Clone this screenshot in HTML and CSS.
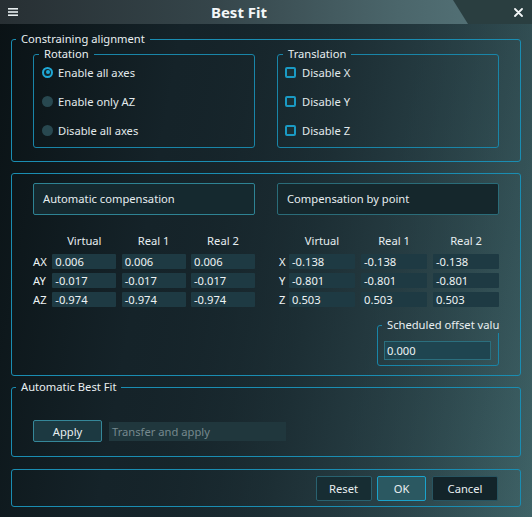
FILE: index.html
```html
<!DOCTYPE html>
<html lang="en">
<head>
<meta charset="utf-8">
<title>Best Fit</title>
<link rel="stylesheet" href="styles.css">
</head>
<body>
<div class="window">
  <header class="titlebar">
    <div class="menu">
      <svg width="10" height="8" viewBox="0 0 10 8"><rect x="0" y="0" width="10" height="1.6" fill="#e8eef0"/><rect x="0" y="3.2" width="10" height="1.6" fill="#e8eef0"/><rect x="0" y="6.4" width="10" height="1.6" fill="#e8eef0"/></svg>
    </div>
    <div class="title">Best Fit</div>
    <div class="close-area">
      <svg width="9" height="9" viewBox="0 0 9 9"><path d="M1 1 L8 8 M8 1 L1 8" stroke="#f2f6f7" stroke-width="1.8" stroke-linecap="round"/></svg>
    </div>
  </header>

  <main class="content">
    <fieldset class="group g1">
      <legend>Constraining alignment</legend>
      <div class="two-col">
        <fieldset class="sub rotation">
          <legend>Rotation</legend>
          <div class="list">
            <div class="opt"><span class="radio on"></span>Enable all axes</div>
            <div class="opt"><span class="radio"></span>Enable only AZ</div>
            <div class="opt"><span class="radio"></span>Disable all axes</div>
          </div>
        </fieldset>
        <fieldset class="sub translation">
          <legend>Translation</legend>
          <div class="list">
            <div class="opt"><span class="check"></span>Disable X</div>
            <div class="opt"><span class="check"></span>Disable Y</div>
            <div class="opt"><span class="check"></span>Disable Z</div>
          </div>
        </fieldset>
      </div>
    </fieldset>

    <div class="group g2">
      <div class="col">
        <div class="modebox auto">Automatic compensation</div>
        <div class="table left">
          <span></span><span class="hd">Virtual</span><span class="hd">Real 1</span><span class="hd">Real 2</span>
          <span class="lbl">AX</span><span class="cell">0.006</span><span class="cell">0.006</span><span class="cell">0.006</span>
          <span class="lbl">AY</span><span class="cell">-0.017</span><span class="cell">-0.017</span><span class="cell">-0.017</span>
          <span class="lbl">AZ</span><span class="cell">-0.974</span><span class="cell">-0.974</span><span class="cell">-0.974</span>
        </div>
      </div>
      <div class="col">
        <div class="modebox point">Compensation by point</div>
        <div class="table right">
          <span></span><span class="hd">Virtual</span><span class="hd">Real 1</span><span class="hd">Real 2</span>
          <span class="lbl">X</span><span class="cell">-0.138</span><span class="cell">-0.138</span><span class="cell">-0.138</span>
          <span class="lbl">Y</span><span class="cell">-0.801</span><span class="cell">-0.801</span><span class="cell">-0.801</span>
          <span class="lbl">Z</span><span class="cell">0.503</span><span class="cell">0.503</span><span class="cell">0.503</span>
        </div>
        <fieldset class="offset">
          <legend>Scheduled offset valu</legend>
          <div class="offset-body">
            <div class="input">0.000</div>
          </div>
        </fieldset>
      </div>
    </div>

    <fieldset class="group g3">
      <legend>Automatic Best Fit</legend>
      <div class="apply-row">
        <button class="btn apply">Apply</button>
        <div class="placeholder">Transfer and apply</div>
      </div>
    </fieldset>

    <div class="group g4">
      <button class="btn reset">Reset</button>
      <button class="btn ok">OK</button>
      <button class="btn cancel">Cancel</button>
    </div>
  </main>
</div>
</body>
</html>
```

FILE: styles.css
```css
* { box-sizing: border-box; }

html, body {
  margin: 0;
  padding: 0;
  background: #0d1519;
}

body {
  font-family: "Noto Sans", "Open Sans", "DejaVu Sans", sans-serif;
  font-size: 11.2px;
  color: #e4ecee;
}

.window {
  width: 532px;
  height: 517px;
  overflow: hidden;
  background: linear-gradient(100deg, #0a1215 0%, #152329 30%, #27404600 100%),
              linear-gradient(100deg, #0b1317 0%, #1b2c32 35%, #2f4a50 68%, #3f6367 100%);
}

/* ---------- title bar ---------- */
.titlebar {
  height: 24px;
  display: flex;
  align-items: stretch;
  background: linear-gradient(to right, #272f33 0%, #35454a 40%, #4b666b 75%, #58787d 100%);
}

.menu {
  width: 25px;
  padding-left: 8px;
  display: flex;
  align-items: center;
}
.menu svg { display: block; }

.title {
  flex: 1;
  text-align: center;
  font-weight: bold;
  font-size: 15px;
  line-height: 24px;
  color: #f3f7f8;
}

.close-area {
  width: 79px;
  background: #2a3e40;
  clip-path: polygon(0 0, 100% 0, 100% 100%, 15px 100%);
  display: flex;
  align-items: center;
  justify-content: flex-end;
  padding-right: 9px;
}
.close-area svg { display: block; }

/* ---------- content ---------- */
.content {
  padding: 7px 11px 0 11px;
}

fieldset {
  margin: 0;
  padding: 0;
  min-width: 0;
  border: 1px solid #1a8db2;
  border-radius: 3px;
}

legend {
  margin-left: 4px;
  padding: 0 5px;
  line-height: 16px;
  white-space: nowrap;
  color: #e8eff1;
}

.group {
  border: 1px solid #1a8db2;
  border-radius: 3px;
}

/* group 1 */
.two-col {
  display: grid;
  grid-template-columns: 222px 222px;
  column-gap: 22px;
  margin-top: -1px;
  padding: 0 21px 13px 21px;
}

.sub {
  border-color: #1985a8;
}
.sub legend { margin-left: 5px; }

.list {
  padding: 0 6px 7px 8px;
  display: flex;
  flex-direction: column;
  gap: 9px;
}
.translation .list { padding-left: 7px; }

.opt {
  height: 20px;
  display: flex;
  align-items: center;
  gap: 5px;
  color: #e2eaec;
}

.radio {
  width: 11px;
  height: 11px;
  border-radius: 50%;
  background: #284850;
  flex: none;
}
.radio.on {
  background: #13262c;
  border: 2px solid #1fa8d6;
  position: relative;
}
.radio.on::after {
  content: "";
  position: absolute;
  left: 1.5px;
  top: 1.5px;
  width: 4px;
  height: 4px;
  border-radius: 50%;
  background: #1fa8d6;
}

.check {
  width: 11px;
  height: 11px;
  border: 2px solid #1a9ac4;
  border-radius: 2px;
  background: #1b3035;
  flex: none;
  margin-right: 1px;
}

/* group 2 */
.g2 {
  margin-top: 11px;
  padding: 9px 21px 9px 21px;
  display: grid;
  grid-template-columns: 222px 222px;
  column-gap: 22px;
}

.col {
  display: flex;
  flex-direction: column;
}

.modebox {
  height: 32px;
  line-height: 30px;
  padding-left: 9px;
  border: 1px solid #2e8394;
  border-radius: 2px;
  background: #15292f;
  color: #e6eef0;
}
.modebox.point {
  border-color: #2a6c79;
  background: #15272c;
}

.table {
  margin-top: 18px;
  display: grid;
  justify-content: space-between;
  row-gap: 4px;
}
.table.left { grid-template-columns: 14px 64px 64px 64px; }
.table.right { grid-template-columns: 6px 66px 66px 66px; }

.table .hd {
  text-align: center;
  line-height: 16px;
  margin-bottom: 1px;
  color: #e6eef0;
}
.table .lbl {
  line-height: 15px;
  white-space: nowrap;
  color: #eef3f4;
}
.table.right .lbl { margin-left: 2px; }

.cell {
  height: 15px;
  line-height: 15px;
  padding-left: 3px;
  background: #1e3a43;
  border-radius: 1px;
  color: #eef3f4;
}

.offset {
  margin-top: 10px;
  align-self: flex-end;
  width: 122px;
  border-color: #1985a8;
}
.offset legend {
  margin-left: 4px;
  padding: 0 0 0 5px;
}
.offset-body {
  padding: 8px 0 5px 6px;
}

.input {
  width: 107px;
  height: 19px;
  line-height: 17px;
  padding-left: 2px;
  border: 1px solid #2b6f7e;
  background: #1f4550;
  color: #eef3f4;
}

/* group 3 */
.g3 {
  margin-top: 3px;
}

.apply-row {
  padding: 25px 21px 14px 21px;
  display: flex;
  align-items: center;
  gap: 7px;
}

.btn {
  font-family: inherit;
  font-size: 11.2px;
  color: #e8eff1;
  border: 1px solid #2c6a78;
  border-radius: 2px;
  background: #183037;
  padding: 0;
  cursor: default;
}

.btn.apply {
  width: 69px;
  height: 22px;
  border-color: #358799;
  background: #1c3941;
}

.placeholder {
  width: 177px;
  height: 19px;
  line-height: 19px;
  padding-left: 3px;
  background: #20373d;
  color: #76898e;
}

/* group 4 */
.g4 {
  margin-top: 12px;
  padding: 6px 22px 5px 0;
  display: flex;
  justify-content: flex-end;
  gap: 5px;
}
.g4 .btn { height: 25px; }

.btn.reset {
  width: 56px;
  border-color: #296270;
  background: #172d33;
  padding-right: 1px;
}

.btn.ok {
  width: 49px;
  border-color: #1aa3cc;
  background: #2b5861;
  margin-right: 1px;
}

.btn.cancel {
  width: 66px;
  border-color: #285460;
  background: #13242a;
}
```
